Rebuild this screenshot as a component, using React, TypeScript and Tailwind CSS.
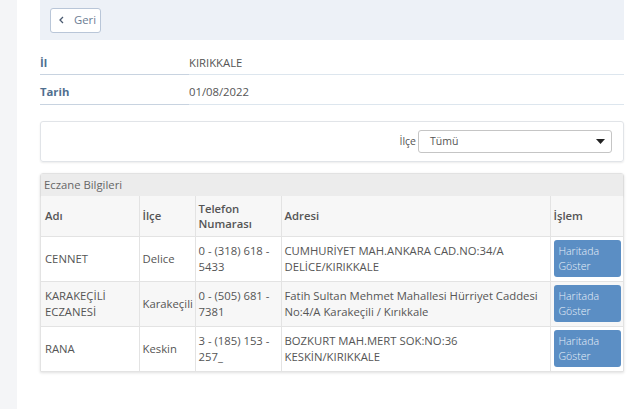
import React from "react";

const rows = [
  { ad: "CENNET", ilce: "Delice", tel: "0 - (318) 618 - 5433", adres: "CUMHURİYET MAH.ANKARA CAD.NO:34/A DELİCE/KIRIKKALE" },
  { ad: "KARAKEÇİLİ ECZANESİ", ilce: "Karakeçili", tel: "0 - (505) 681 - 7381", adres: "Fatih Sultan Mehmet Mahallesi Hürriyet Caddesi No:4/A Karakeçili / Kırıkkale" },
  { ad: "RANA", ilce: "Keskin", tel: "3 - (185) 153 - 257_", adres: "BOZKURT MAH.MERT SOK:NO:36 KESKİN/KIRIKKALE" },
];

export default function App() {
  return (
    <div className="flex h-[409px] w-[640px] bg-white text-[11.3px] text-[#555]" style={{ fontFamily: '"Open Sans", "Noto Sans", sans-serif' }}>
      <div className="w-[17px] shrink-0 bg-[#f4f5f7]" />
      <div className="flex-1 pl-[23px] pr-[4px]">
        <div className="w-[584px]">
          <div className="flex h-[40px] items-center bg-[#edf1f7] px-[10px]">
            <button className="flex h-[25px] w-[51px] items-center gap-[9px] rounded-[3px] border border-[#b9c6d8] bg-white pl-[7px] text-[11.3px] text-[#6b7d93]">
              <svg width="7" height="8" viewBox="0 0 7 8"><path d="M5 1 L2 4 L5 7" fill="none" stroke="#4a5a70" strokeWidth="1.3" /></svg>
              <span>Geri</span>
            </button>
          </div>
          <div className="mt-[12px] flex h-[23px] items-stretch border-b border-[#dde6ee]">
            <div className="-mb-px flex w-[149px] items-center border-b border-[#c8d3e0] font-bold text-[#4f6f8f]">İl</div>
            <div className="flex items-center text-[#555]">KIRIKKALE</div>
          </div>
          <div className="mt-[6px] flex h-[24px] items-stretch border-b border-[#dde6ee]">
            <div className="-mb-px flex w-[149px] items-center border-b border-[#c8d3e0] font-bold text-[#4f6f8f]">Tarih</div>
            <div className="flex items-center text-[#555]">01/08/2022</div>
          </div>
          <div className="mt-[16px] flex h-[41px] items-center justify-end rounded-[3px] border border-[#e1e4e8] pr-[11px] shadow-[0_1px_2px_rgba(0,0,0,0.08)]">
            <span className="mr-[2px] text-[10.5px] text-[#555]">İlçe</span>
            <div className="flex h-[23px] w-[194px] items-center justify-between rounded-[3px] border border-[#c5c5c5] pl-[11px] pr-[6px] text-[10.5px] text-[#555]">
              <span>Tümü</span>
              <svg width="9" height="5" viewBox="0 0 9 5"><path d="M0 0 H9 L4.5 5 Z" fill="#222" /></svg>
            </div>
          </div>
          <div className="mt-[11px] rounded-t-[3px] border border-[#e3e3e3] shadow-[0_1px_3px_rgba(0,0,0,0.12)]">
            <div className="flex h-[22px] items-center bg-[#ececec] pl-[3px] text-[#666] shadow-[0_1px_2px_rgba(0,0,0,0.08)]">Eczane Bilgileri</div>
            <table className="w-full border-collapse">
              <colgroup>
                <col className="w-[98px]" />
                <col className="w-[56px]" />
                <col className="w-[86px]" />
                <col className="w-[269px]" />
                <col />
              </colgroup>
              <thead>
                <tr className="h-[40px] bg-[#f7f7f7]">
                  <th className="border-r border-[#e3e3e3] pl-[4px] text-left font-semibold leading-[15px] text-[#555]">Adı</th>
                  <th className="border-r border-[#e3e3e3] pl-[3px] text-left font-semibold leading-[15px] text-[#555]">İlçe</th>
                  <th className="border-r border-[#e3e3e3] pl-[3px] text-left font-semibold leading-[15px] text-[#555]">Telefon<br />Numarası</th>
                  <th className="border-r border-[#e3e3e3] pl-[3px] text-left font-semibold leading-[15px] text-[#555]">Adresi</th>
                  <th className="pl-[3px] text-left font-semibold leading-[15px] text-[#555]">İşlem</th>
                </tr>
              </thead>
              <tbody>
                {rows.map((r, i) => (
                  <tr key={i} className={`h-[45px] border-t border-[#e3e3e3] ${i === 1 ? "bg-[#f7f7f7]" : "bg-white"}`}>
                    <td className="border-r border-[#e3e3e3] pl-[4px] leading-[16px]">{r.ad}</td>
                    <td className="border-r border-[#e3e3e3] pl-[3px] leading-[16px]">{r.ilce}</td>
                    <td className="border-r border-[#e3e3e3] pl-[3px] pr-[4px] leading-[16px]">{r.tel}</td>
                    <td className="border-r border-[#e3e3e3] pl-[3px] pr-[4px] leading-[16px]">{r.adres}</td>
                    <td className="pl-[3px]">
                      <div className="flex h-[37px] w-[67px] flex-col justify-center rounded-[3px] bg-[#5b8ec4] pl-[5px] text-[10.5px] font-light leading-[15px] text-[#e8f0f9]">
                        <span>Haritada</span>
                        <span>Göster</span>
                      </div>
                    </td>
                  </tr>
                ))}
              </tbody>
            </table>
          </div>
        </div>
      </div>
    </div>
  );
}
